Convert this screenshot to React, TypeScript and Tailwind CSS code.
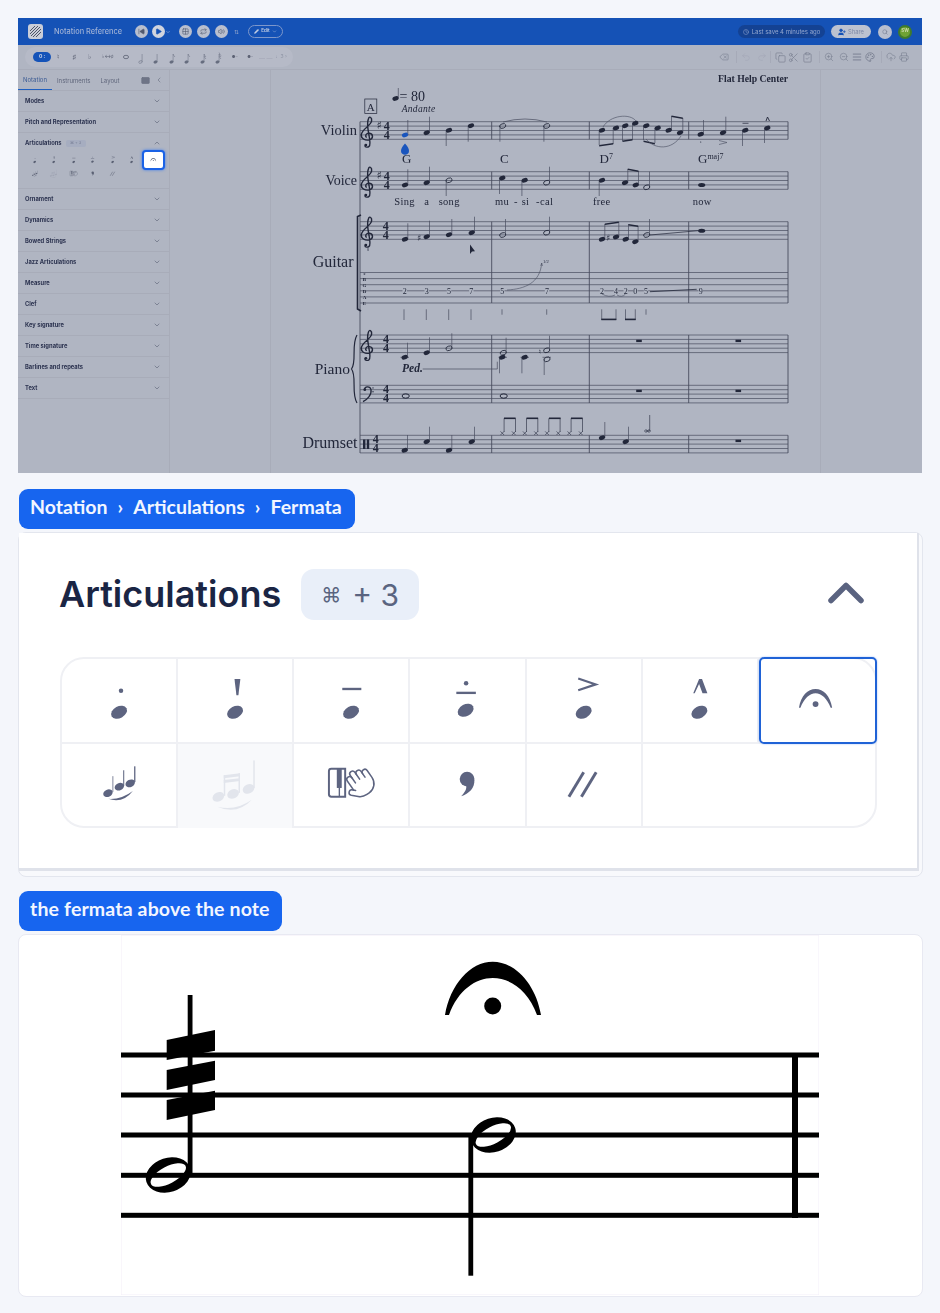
import type { ReactNode } from "react";
import {
  AlignJustify,
  ChevronDown,
  ChevronLeft,
  ChevronUp,
  ClipboardCheck,
  Clock,
  CloudUpload,
  Copy,
  Delete,
  Hand,
  Keyboard,
  Palette,
  Pencil,
  Play,
  Printer,
  Redo2,
  Repeat,
  Scissors,
  Search,
  SkipBack,
  Undo2,
  UserPlus,
  Volume2,
  ZoomIn,
  ZoomOut,
  Grid2x2,
} from "lucide-react";

const INK = "#22273a";
const LINE = "#474c5e";

function Head({ x, y }: { x: number; y: number }) {
  return <ellipse cx={x} cy={y} rx={8.6} ry={6} transform={`rotate(-28 ${x} ${y})`} />;
}

function ArtIcon({ kind }: { kind: string }) {
  return (
    <svg viewBox="0 1.5 116 85" className="block h-full w-full" fill="currentColor">
      {kind === "staccato" && (
        <>
          <circle cx={60} cy={34} r={2.3} />
          <Head x={58} y={56} />
        </>
      )}
      {kind === "wedge" && (
        <>
          <polygon points="57.4,22 63.4,22 61.4,38.5 59.4,38.5" />
          <Head x={58} y={56} />
        </>
      )}
      {kind === "tenuto" && (
        <>
          <rect x={49} y={31} width={19.5} height={2.4} />
          <Head x={58} y={56} />
        </>
      )}
      {kind === "both" && (
        <>
          <circle cx={57} cy={26.3} r={2.3} />
          <rect x={47} y={35} width={20} height={2.4} />
          <Head x={56.5} y={54} />
        </>
      )}
      {kind === "accent" && (
        <>
          <polyline points="52,21.5 70,27.5 52,33.5" fill="none" stroke="currentColor" strokeWidth={2.2} />
          <Head x={57.6} y={56} />
        </>
      )}
      {kind === "marcato" && (
        <>
          <polygon points="57,22 60,22 65.5,36.5 60.5,36.5 57,27 52.5,36.5 51,36.5" />
          <Head x={57.3} y={56} />
        </>
      )}
      {kind === "fermata" && (
        <g transform="translate(-0.5 0)">
          <path d="M39 51.5C41 39 48 32.3 56 32.3C64 32.3 71 39 73 51.5L71.5 51.5C68 42 62 36.5 56 36.5C50 36.5 44 42 40.5 51.5Z" />
          <circle cx={56} cy={47.7} r={3} />
        </g>
      )}
      {kind === "slur" && (
        <>
          <ellipse cx={46.7} cy={51.3} rx={5} ry={3.7} transform="rotate(-25 46.7 51.3)" />
          <ellipse cx={58.3} cy={44.7} rx={5} ry={3.7} transform="rotate(-25 58.3 44.7)" />
          <ellipse cx={69.3} cy={41.3} rx={5} ry={3.7} transform="rotate(-25 69.3 41.3)" />
          <rect x={51} y={34} width={1.3} height={16} opacity={0.6} />
          <rect x={62} y={28} width={1.3} height={16} opacity={0.8} />
          <rect x={73.3} y={24} width={1.3} height={16} />
          <path d="M47 57Q60 58 72 49Q62 62 47 57Z" />
        </>
      )}
      {kind === "beamed" && (
        <>
          <ellipse cx={41} cy={55} rx={6.2} ry={4.6} transform="rotate(-25 41 55)" />
          <ellipse cx={56} cy={52} rx={6.2} ry={4.6} transform="rotate(-25 56 52)" />
          <ellipse cx={71.7} cy={47} rx={6.2} ry={4.6} transform="rotate(-25 71.7 47)" />
          <rect x={46.5} y={33} width={1.5} height={21} />
          <rect x={61.5} y={31} width={1.5} height={20} />
          <rect x={76.5} y={18} width={1.5} height={28} />
          <polygon points="46.5,33 63,31 63,34 46.5,36" />
          <polygon points="46.5,38 63,36 63,39 46.5,41" />
          <path d="M40 65Q58 70 75 58Q60 74 40 65Z" />
        </>
      )}
      {kind === "piano" && (
        <>
          <path d="M38 26.5H52V55H38Q35.5 55 35.5 52.5V29Q35.5 26.5 38 26.5Z" fill="none" stroke="currentColor" strokeWidth={2} />
          <rect x={43.5} y={26} width={5} height={20} />
          <rect x={45.4} y={46} width={1.4} height={9} />
          <g transform="translate(49 24) rotate(-35 17 17)">
            <Hand width={34} height={34} strokeWidth={1.1} />
          </g>
        </>
      )}
      {kind === "comma" && (
        <>
          <circle cx={58} cy={37} r={7.5} />
          <path d="M65.4 38C66 46 60 52 52 54.5C56 50 58 47 57 43Z" />
        </>
      )}
      {kind === "slashes" && (
        <g stroke="currentColor" strokeWidth={3}>
          <line x1={42.6} y1={55} x2={57.6} y2={30} />
          <line x1={55.3} y1={55} x2={70.3} y2={30} />
        </g>
      )}
    </svg>
  );
}

const topKinds = ["staccato", "wedge", "tenuto", "both", "accent", "marcato"];
const bottomKinds = ["slur", "beamed", "piano", "comma", "slashes"];

function NoteGlyph({ flags = 0, hollow = false }: { flags?: number; hollow?: boolean }) {
  return (
    <svg width="10" height="16" viewBox="0 0 10 16" className="text-[#666c7e]">
      <ellipse cx="3.5" cy="13" rx="1.8" ry="1.2" transform="rotate(-20 3.5 13)" fill={hollow ? "none" : "currentColor"} stroke="currentColor" strokeWidth="0.5" />
      <line x1="5.1" y1="13" x2="5.1" y2="5" stroke="currentColor" strokeWidth="0.5" />
      {flags > 0 && <path d="M5.1 5Q5.8 7 7 8" fill="none" stroke="currentColor" strokeWidth="0.5" />}
      {flags > 1 && <path d="M5.1 7Q5.8 9 7 10" fill="none" stroke="currentColor" strokeWidth="0.5" />}
      {flags > 2 && <path d="M5.1 3.5Q5.8 5.5 7 6.5" fill="none" stroke="currentColor" strokeWidth="0.5" />}
    </svg>
  );
}

function LeftToolbar() {
  const cell = "flex h-5 w-[15.5px] shrink-0 items-center justify-center text-[7px] text-[#5c6274]";
  const dotted = "flex h-5 w-[15.5px] shrink-0 items-center justify-center text-[4px] text-[#5c6274]";
  return (
    <div className="flex h-5 w-[268px] items-center rounded-full bg-[#b6bac7] pl-[8px]">
      <div className="flex h-[10px] w-[18px] items-center justify-center rounded-full bg-[#1553b8] text-[5px] font-bold text-[#cfd8ea]">0 :</div>
      <div className={cell}>♮</div>
      <div className={cell}>♯</div>
      <div className={cell}>♭</div>
      <div className="flex h-5 w-[21px] shrink-0 items-center justify-center text-[5px] text-[#5c6274]">♭↔♯</div>
      <div className={cell}>
        <svg width="8" height="6" viewBox="0 0 8 6"><ellipse cx="4" cy="3" rx="2.6" ry="1.7" fill="none" stroke="#5c6274" strokeWidth="0.8" /></svg>
      </div>
      <div className={cell}><NoteGlyph hollow /></div>
      <div className={cell}><NoteGlyph /></div>
      <div className={cell}><NoteGlyph flags={1} /></div>
      <div className={cell}><NoteGlyph flags={1} /></div>
      <div className={cell}><NoteGlyph flags={2} /></div>
      <div className={cell}><NoteGlyph flags={3} /></div>
      <div className={dotted}>●··</div>
      <div className={dotted}>●··</div>
      <div className="flex h-5 w-[15.5px] shrink-0 items-center justify-center text-[6px] text-[#a0a5b4]">— —</div>
      <div className="flex h-5 w-[15.5px] shrink-0 items-center justify-center text-[5px] text-[#9096a6]">♩3 ›</div>
    </div>
  );
}

function RightToolbar() {
  const icon = "text-[#777d8f]";
  return (
    <div className="flex items-center">
      <Delete size={10} strokeWidth={1.4} className={icon} />
      <div className="mr-[4px] ml-[7px] h-3 w-px bg-[#a6aab8]" />
      <Undo2 size={10} strokeWidth={1.2} className="text-[#a0a5b4]" />
      <Redo2 size={10} strokeWidth={1.2} className="ml-[6px] text-[#a0a5b4]" />
      <div className="mr-[4px] ml-[3px] h-3 w-px bg-[#a6aab8]" />
      <Copy size={11} strokeWidth={1.4} className={icon} />
      <Scissors size={11} strokeWidth={1.4} className={`ml-[2px] ${icon}`} />
      <ClipboardCheck size={11} strokeWidth={1.4} className={`ml-[3px] ${icon}`} />
      <div className="mr-[4px] ml-[6px] h-3 w-px bg-[#a6aab8]" />
      <ZoomIn size={10} strokeWidth={1.4} className={icon} />
      <ZoomOut size={10} strokeWidth={1.4} className={`ml-[5px] ${icon}`} />
      <AlignJustify size={10} strokeWidth={2.2} className={`ml-[3px] ${icon}`} />
      <Palette size={10} strokeWidth={2} className={`ml-[3px] ${icon}`} />
      <div className="mr-[4px] ml-[6px] h-3 w-px bg-[#a6aab8]" />
      <CloudUpload size={10} strokeWidth={1.4} className={icon} />
      <Printer size={10} strokeWidth={1.4} className={`ml-[3px] ${icon}`} />
    </div>
  );
}

function RoundBtn({ children, className = "" }: { children: ReactNode; className?: string }) {
  return <div className={`flex h-[13px] w-[13px] items-center justify-center rounded-full bg-[#b9bfce] text-[#51596e] ${className}`}>{children}</div>;
}

function Header() {
  return (
    <div className="flex h-[27px] items-center justify-between bg-[#1552b6] pl-[10px] pr-[10px]">
      <div className="flex items-center">
        <div className="flex h-[15px] w-[15px] items-center justify-center overflow-hidden rounded-[3px] bg-[#c9cdd8]">
          <svg width="11" height="11" viewBox="0 0 11 11" stroke="#4d5468" strokeWidth="1">
            <line x1="0" y1="5" x2="5" y2="0" />
            <line x1="0" y1="8" x2="8" y2="0" />
            <line x1="1" y1="10" x2="10" y2="1" />
            <line x1="3" y1="11" x2="11" y2="3" />
            <line x1="6" y1="11" x2="11" y2="6" />
          </svg>
        </div>
        <span className="ml-[11px] w-[80px] text-[7.4px] leading-none font-medium text-[#9fb1d6]">Notation Reference</span>
        <RoundBtn className="ml-[1px]"><SkipBack size={7} fill="currentColor" /></RoundBtn>
        <RoundBtn className="ml-[4px] bg-[#d0d4de]"><Play size={7} fill="#1552b6" className="text-[#1552b6]" /></RoundBtn>
        <ChevronDown size={6} className="text-[#a9b9da]" />
        <RoundBtn className="ml-[8px]"><Grid2x2 size={7} /></RoundBtn>
        <RoundBtn className="ml-[5px]"><Repeat size={7} /></RoundBtn>
        <RoundBtn className="ml-[5px]"><Volume2 size={7} /></RoundBtn>
        <span className="ml-[6px] text-[6px] leading-none text-[#8fa3cc]">⇅</span>
        <div className="ml-[9px] flex h-[13px] w-[35px] items-center justify-center gap-[2px] rounded-full border border-[#7d97cb] text-[#c4cfe4]">
          <Pencil size={5} fill="currentColor" />
          <span className="text-[4.6px] leading-none font-semibold">Edit</span>
          <ChevronDown size={5} />
        </div>
      </div>
      <div className="flex items-center">
        <div className="flex h-[13px] w-[87px] items-center justify-center gap-[3px] rounded-full bg-[#144293] text-[#93a7cf]">
          <Clock size={6} />
          <span className="text-[6px] leading-none">Last save 4 minutes ago</span>
        </div>
        <div className="ml-[6px] flex h-[13px] w-[40px] items-center justify-center gap-[2px] rounded-full bg-[#bcc2d0]">
          <UserPlus size={8} fill="#1552b6" className="text-[#1552b6]" />
          <span className="text-[5.8px] leading-none text-[#7d88a6]">Share</span>
        </div>
        <div className="ml-[7px] flex h-[14px] w-[14px] items-center justify-center rounded-full bg-[#b9bfce] text-[#6d7589]">
          <Search size={6} />
        </div>
        <div className="ml-[6px] flex h-[14px] w-[14px] items-center justify-center rounded-full border-2 border-[#3f7a2d] bg-[#6fa234] text-[4.5px] font-bold text-[#c9d8a8]">SW</div>
      </div>
    </div>
  );
}

const sections = [
  "Ornament",
  "Dynamics",
  "Bowed Strings",
  "Jazz Articulations",
  "Measure",
  "Clef",
  "Key signature",
  "Time signature",
  "Barlines and repeats",
  "Text",
];

function SideRow({ label }: { label: string }) {
  return (
    <div className="flex h-[21px] items-center justify-between border-b border-[#a8acb9] pl-[7px] pr-[8px]">
      <span className="text-[5.8px] leading-none font-bold text-[#2c3350]">{label}</span>
      <ChevronDown size={8} strokeWidth={1.6} className="text-[#4f566c]" />
    </div>
  );
}

function Sidebar() {
  return (
    <div className="w-[152px] shrink-0 border-r border-[#a8acb9]">
      <div className="flex h-[21px] items-center justify-between border-b border-[#a8acb9] pr-[6px] text-[6px] text-[#60677c]">
        <div className="flex h-full items-center">
          <span className="flex h-full w-[34px] items-center justify-center border-b border-[#1f5fbf] text-[#3d5c94]">Notation</span>
          <span className="ml-[5px]">Instruments</span>
          <span className="ml-[10px]">Layout</span>
        </div>
        <div className="flex items-center gap-[5px]">
          <Keyboard size={9} fill="#6e7486" className="text-[#6e7486]" />
          <ChevronLeft size={8} className="text-[#6e7486]" />
        </div>
      </div>
      <SideRow label="Modes" />
      <SideRow label="Pitch and Representation" />
      <div className="h-[56px] border-b border-[#a8acb9]">
        <div className="flex h-5 items-center justify-between pl-[7px] pr-[8px]">
          <div className="flex items-center">
            <span className="text-[5.8px] leading-none font-bold text-[#2c3350]">Articulations</span>
            <span className="ml-[4px] flex h-[7px] w-5 items-center justify-center rounded-[2px] bg-[#a6adc0] text-[4px] leading-none text-[#7a8198]">⌘ + 3</span>
          </div>
          <ChevronUp size={8} strokeWidth={1.6} className="text-[#4f566c]" />
        </div>
        <div className="ml-[7px] grid w-[136px] grid-cols-7 text-[#5a6073]">
          {topKinds.map((k) => (
            <div key={k} className="h-[14px]"><ArtIcon kind={k} /></div>
          ))}
          <div className="relative h-[14px]">
            <div className="absolute -top-[3px] -right-[4px] -bottom-[3px] left-0 rounded-[4px] border-2 border-[#1a62e6] bg-white text-[#5a6073] shadow-[0_0_3px_#3b7bf0]">
              <ArtIcon kind="fermata" />
            </div>
          </div>
          {bottomKinds.map((k) => (
            <div key={k} className={`h-[14px] ${k === "beamed" ? "text-[#a0a5b4]" : ""}`}><ArtIcon kind={k} /></div>
          ))}
        </div>
      </div>
      {sections.map((s) => (
        <SideRow key={s} label={s} />
      ))}
    </div>
  );
}

function Staff({ y, lines = 5, gap = 4.4 }: { y: number; lines?: number; gap?: number }) {
  return (
    <>
      {Array.from({ length: lines }, (_, i) => (
        <line key={i} x1={360} x2={788} y1={y + i * gap} y2={y + i * gap} stroke={LINE} strokeWidth={0.7} />
      ))}
    </>
  );
}

function Bars({ y1, y2 }: { y1: number; y2: number }) {
  return (
    <>
      {[491.7, 589.3, 688.7, 788].map((x) => (
        <line key={x} x1={x} x2={x} y1={y1} y2={y2} stroke={LINE} strokeWidth={0.9} />
      ))}
    </>
  );
}

function Note({ x, y, to, hollow = false, color = INK }: { x: number; y: number; to?: number; hollow?: boolean; color?: string }) {
  const sx = to === undefined ? x : to < y ? x + 2.8 : x - 2.8;
  return (
    <>
      {to !== undefined && <line x1={sx} x2={sx} y1={y} y2={to} stroke={LINE} strokeWidth={0.7} />}
      <ellipse
        cx={x}
        cy={y}
        rx={3.2}
        ry={2.2}
        transform={`rotate(-20 ${x} ${y})`}
        fill={hollow ? "none" : color}
        stroke={hollow ? INK : "none"}
        strokeWidth={0.8}
      />
    </>
  );
}

function Beam({ x1, x2, y1, y2 }: { x1: number; x2: number; y1: number; y2: number }) {
  return <polygon points={`${x1},${y1} ${x2},${y2} ${x2},${y2 + 1.6} ${x1},${y1 + 1.6}`} fill={INK} />;
}

function TrebleClef({ x, y }: { x: number; y: number }) {
  return (
    <g transform={`translate(${x} ${y}) scale(1.2 1)`}>
      <path
        d="M-2 10C-3.5 12 -0.5 12.8 0.8 11.5C2.4 10 1.6 5 0.8 0C0 -6 -1.2 -11 0.3 -16C1.2 -19.5 3.4 -17.5 3 -14C2.5 -9.5 -5 -6 -5.6 -0.5C-6 3.5 -2.5 5.8 1 5C4.6 4 4.6 -1 1.2 -1.8C-1.2 -2.2 -3 0.6 -1.2 2.6"
        fill="none"
        stroke={INK}
        strokeWidth={1.2}
      />
      <circle cx={-1.8} cy={10} r={1.2} fill={INK} />
    </g>
  );
}

function BassClef({ x, y }: { x: number; y: number }) {
  return (
    <g transform={`translate(${x} ${y})`} fill={INK}>
      <path d="M1.5 0C1.5 -3.5 7 -4 8 0C9 5 4 10 0 12" fill="none" stroke={INK} strokeWidth={1.3} />
      <circle cx={1.8} cy={0} r={1.4} />
      <circle cx={10} cy={-1.8} r={0.7} />
      <circle cx={10} cy={2} r={0.7} />
    </g>
  );
}

function Meter({ x, y }: { x: number; y: number }) {
  return (
    <g fontSize={12} fontWeight={700} textAnchor="middle" fill={INK}>
      <text x={x} y={y + 8}>4</text>
      <text x={x} y={y + 16.8}>4</text>
    </g>
  );
}

function Rest({ x, y }: { x: number; y: number }) {
  return <rect x={x - 2.8} y={y - 1} width={5.6} height={2.4} fill={INK} />;
}

function DrumX({ x }: { x: number }) {
  return (
    <g stroke={INK} strokeWidth={0.6}>
      <line x1={x - 1.8} x2={x + 1.8} y1={431.4} y2={435} />
      <line x1={x + 1.8} x2={x - 1.8} y1={431.4} y2={435} />
      <line x1={x + 1.8} x2={x + 1.8} y1={418.3} y2={432} />
    </g>
  );
}

function Sharp({ x, y, size = 11 }: { x: number; y: number; size?: number }) {
  return <text x={x} y={y} fontSize={size} fill={INK} fontFamily="DejaVu Sans">♯</text>;
}

function Score() {
  return (
    <svg viewBox="271 70 549 403" className="block h-[403px] w-[549px] font-['Liberation_Serif',serif]">
      <text x={788} y={82} fontSize={9.7} fontWeight={700} textAnchor="end" fill={INK}>Flat Help Center</text>

      <rect x={364.8} y={99} width={12} height={14.4} fill="none" stroke={INK} strokeWidth={0.7} />
      <text x={370.8} y={110.5} fontSize={11} textAnchor="middle" fill={INK}>A</text>
      <Note x={395.5} y={98.5} to={88} />
      <text x={399.5} y={100.8} fontSize={14} fill={INK}>= 80</text>
      <text x={401.7} y={112} fontSize={9.5} fontStyle="italic" fill={INK} letterSpacing={0.3}>Andante</text>

      {/* staff labels */}
      <g textAnchor="end" fill={INK}>
        <text x={357} y={135} fontSize={14.5}>Violin</text>
        <text x={357} y={185} fontSize={14}>Voice</text>
        <text x={353.5} y={266.7} fontSize={16}>Guitar</text>
        <text x={350} y={373.5} fontSize={15.5}>Piano</text>
        <text x={357.5} y={448.3} fontSize={16}>Drumset</text>
      </g>

      <line x1={360} x2={360} y1={121.7} y2={453} stroke={LINE} strokeWidth={0.9} />

      {/* violin */}
      <Staff y={121.7} />
      <Bars y1={121.7} y2={139.3} />
      <TrebleClef x={368} y={135} />
      <Sharp x={376.5} y={129} />
      <Meter x={386.7} y={121.7} />
      <Note x={405} y={135} to={120} color="#1a55bd" />
      <path d="M405 143.5C402 147 401 149 401 151C401 156 409 156 409 151C409 149 408 147 405 143.5Z" fill="#1a55bd" />
      <Note x={426.7} y={132.7} to={116.7} />
      <Note x={449} y={130.3} to={146} />
      <Note x={471} y={125.7} to={141.7} />
      <Note x={502.7} y={126} to={141.7} hollow />
      <Note x={546.7} y={126} to={141.7} hollow />
      <path d="M503 122Q525 116 547 122" fill="none" stroke={LINE} strokeWidth={0.7} />
      <Note x={602} y={130.3} to={145} />
      <Note x={616} y={128} to={144} />
      <Beam x1={599.2} x2={613.2} y1={145} y2={143} />
      <Note x={625.3} y={125.7} to={141} />
      <Note x={635.3} y={123.3} to={139.5} />
      <Beam x1={622.5} x2={632.5} y1={140.5} y2={139} />
      <Note x={646.3} y={125.7} to={140} />
      <Note x={657.7} y={128} to={143} />
      <Beam x1={643.5} x2={654.9} y1={140.5} y2={143} />
      <Note x={668.7} y={130.3} to={116} />
      <Note x={680} y={132.7} to={118} />
      <Beam x1={671.5} x2={682.8} y1={115.5} y2={117.5} />
      <path d="M603 127C610 115 630 113 636 121" fill="none" stroke={LINE} strokeWidth={0.6} />
      <path d="M646 139C655 150 672 150 681 136" fill="none" stroke={LINE} strokeWidth={0.6} />
      <Note x={700.7} y={134.3} to={120} />
      <circle cx={700.7} cy={142} r={0.6} fill={INK} />
      <Note x={723} y={132.7} to={116.7} />
      <polyline points="719,140.5 727,142.5 719,144.5" fill="none" stroke={LINE} strokeWidth={0.6} />
      <Note x={745.3} y={130.3} to={146} />
      <line x1={742.5} x2={748.5} y1={123.3} y2={123.3} stroke={INK} strokeWidth={0.7} />
      <Note x={767.3} y={128} to={143} />
      <path d="M766 121L767.5 117L769.5 121" fill="none" stroke={INK} strokeWidth={0.9} />

      {/* chords */}
      <g fontSize={13} fill={INK}>
        <text x={402} y={163}>G</text>
        <text x={500} y={163}>C</text>
        <text x={599.5} y={163}>D<tspan fontSize={8} dy={-4}>7</tspan></text>
        <text x={698} y={163}>G<tspan fontSize={8} dy={-4}>maj7</tspan></text>
      </g>

      {/* voice */}
      <Staff y={171.7} />
      <Bars y1={171.7} y2={189.3} />
      <TrebleClef x={368} y={185} />
      <Sharp x={376.5} y={179} />
      <Meter x={386.7} y={171.7} />
      <Note x={405} y={185} to={169.3} />
      <Note x={426.7} y={182.7} to={166.7} />
      <Note x={449} y={180.3} to={196} hollow />
      <Note x={502.3} y={178} to={194} />
      <Note x={524.7} y={180.3} to={196} />
      <Note x={546.7} y={182.7} to={166.7} hollow />
      <Note x={602} y={180.3} to={196} />
      <Note x={625} y={182.7} to={169} />
      <Note x={635.7} y={185} to={171} />
      <Beam x1={627.8} x2={638.5} y1={168.5} y2={170.5} />
      <Note x={646.7} y={187.3} to={171.7} hollow />
      <ellipse cx={701.7} cy={185} rx={3.6} ry={2} fill={INK} />
      <g fontSize={10.5} fill={INK} letterSpacing={0.3}>
        <text x={394.3} y={205}>Sing</text>
        <text x={424.3} y={205}>a</text>
        <text x={438.7} y={205}>song</text>
        <text x={495} y={205}>mu</text>
        <text x={514} y={205}>-</text>
        <text x={521.7} y={205}>si</text>
        <text x={536} y={205}>-</text>
        <text x={540} y={205}>cal</text>
        <text x={593} y={205}>free</text>
        <text x={692.7} y={205}>now</text>
      </g>

      {/* guitar */}
      <path d="M361 215L357.5 216.5V309L361 311" fill="none" stroke={INK} strokeWidth={1.6} />
      <Staff y={221.7} />
      <Staff y={272.5} lines={6} gap={6.1} />
      <Bars y1={221.7} y2={303} />
      <TrebleClef x={368} y={235} />
      <text x={368} y={251} fontSize={4} textAnchor="middle" fill={INK}>8</text>
      <Meter x={385.7} y={221.7} />
      <Note x={405} y={239.3} to={223.3} />
      <Sharp x={417} y={241} size={9} />
      <Note x={426.7} y={236.7} to={220.7} />
      <Note x={449} y={234.7} to={219} />
      <Note x={471.7} y={232.7} to={216.7} />
      <Note x={502.7} y={235} to={219} hollow />
      <Note x={546.7} y={232.7} to={216.7} hollow />
      <Note x={602} y={239.3} to={224} />
      <Sharp x={606} y={241} size={9} />
      <Note x={616} y={237} to={222} />
      <Beam x1={604.8} x2={618.8} y1={223.5} y2={221.5} />
      <Note x={625.7} y={239.3} to={224} />
      <Note x={635.3} y={241.7} to={226} />
      <Beam x1={628.5} x2={638.1} y1={224} y2={225.5} />
      <Note x={646.7} y={235} to={219} hollow />
      <ellipse cx={701.7} cy={230.7} rx={3.6} ry={2} fill={INK} />
      <line x1={650} x2={698} y1={235} y2={230.7} stroke={INK} strokeWidth={0.7} />
      <path d="M470 244.5L470 254L472 251.6L475 251.2Z" fill={INK} />

      <g fontSize={5} fontWeight={700} textAnchor="middle" fill={INK}>
        <text x={364.5} y={274.5}>e</text>
        <text x={364.5} y={280.5}>B</text>
        <text x={364.5} y={286.5}>G</text>
        <text x={364.5} y={292.5}>D</text>
        <text x={364.5} y={298.5}>A</text>
        <text x={364.5} y={304.5}>E</text>
      </g>
      <g fontSize={8} textAnchor="middle" fill={INK}>
        {[
          [404.7, "2"],
          [426.7, "3"],
          [449, "5"],
          [471.3, "7"],
          [502.3, "5"],
          [547, "7"],
          [602, "2"],
          [616, "4"],
          [625.7, "2"],
          [635.3, "0"],
          [646, "5"],
          [700.7, "9"],
        ].map(([x, n]) => (
          <g key={`${x}`}>
            <rect x={(x as number) - 2.2} y={287.5} width={4.4} height={6.4} fill="#b0b5c2" />
            <text x={x} y={293.5}>{n}</text>
          </g>
        ))}
      </g>
      <path d="M507 290C525 289 540 283 541.7 263" fill="none" stroke={LINE} strokeWidth={0.6} />
      <path d="M541.7 263L540.7 266M541.7 263L542.7 266" fill="none" stroke={LINE} strokeWidth={0.5} />
      <text x={543} y={263} fontSize={4.5} fill={INK}>1/2</text>
      <path d="M602 294Q609 298 615 295M617 295Q622 298 625.5 294" fill="none" stroke={LINE} strokeWidth={0.6} />
      <line x1={650} x2={696.7} y1={291.7} y2={289.3} stroke={INK} strokeWidth={0.8} />

      {/* rhythm stems */}
      <g stroke={LINE} strokeWidth={0.7}>
        {[404, 426.3, 448.7, 471].map((x) => (
          <line key={x} x1={x} x2={x} y1={309.3} y2={320} />
        ))}
        {[502, 546.7, 646].map((x) => (
          <line key={x} x1={x} x2={x} y1={309.3} y2={314.7} />
        ))}
        {[601.7, 616, 625.5, 635.3].map((x) => (
          <line key={x} x1={x} x2={x} y1={309.3} y2={320} />
        ))}
      </g>
      <rect x={601.3} y={318.6} width={15} height={1.6} fill={INK} />
      <rect x={625} y={318.6} width={10.7} height={1.6} fill={INK} />

      {/* piano */}
      <path d="M357 335C351 345 357 362 351.5 369C357 376 351 393 357 403" fill="none" stroke={INK} strokeWidth={1.2} />
      <Staff y={335} />
      <Staff y={385.3} />
      <Bars y1={335} y2={403} />
      <TrebleClef x={368} y={348.3} />
      <BassClef x={363} y={389.7} />
      <Meter x={386} y={335} />
      <Meter x={386} y={385.3} />
      <line x1={400.5} x2={409} y1={357.3} y2={357.3} stroke={LINE} strokeWidth={0.7} />
      <Note x={404.7} y={357.3} to={342.7} />
      <Note x={426.7} y={352.7} to={337.3} />
      <Note x={449} y={348.3} to={333.3} hollow />
      <line x1={498.5} x2={507} y1={357.3} y2={357.3} stroke={LINE} strokeWidth={0.7} />
      <Note x={503.3} y={352.7} to={337.7} hollow />
      <Note x={502.3} y={357.3} to={373.3} />
      <line x1={520.5} x2={529} y1={357.3} y2={357.3} stroke={LINE} strokeWidth={0.7} />
      <Note x={524.7} y={357.3} to={373.3} />
      <line x1={542.5} x2={551} y1={357.3} y2={357.3} stroke={LINE} strokeWidth={0.7} />
      <text x={538.5} y={354} fontSize={7} fill={INK} fontFamily="DejaVu Sans">♮</text>
      <Note x={546.7} y={350.3} to={335.7} hollow />
      <Note x={547} y={359.3} to={375} hollow />
      <text x={402} y={371.7} fontSize={11.5} fontStyle="italic" fontWeight={700} fill={INK}>Ped.</text>
      <path d="M422.7 369H497.3V361.7" fill="none" stroke={LINE} strokeWidth={0.7} />
      <ellipse cx={405.7} cy={396} rx={3.6} ry={2.2} fill="none" stroke={INK} strokeWidth={1} />
      <ellipse cx={503.7} cy={396} rx={3.6} ry={2.2} fill="none" stroke={INK} strokeWidth={1} />
      <Rest x={639} y={340.7} />
      <Rest x={738.3} y={340.7} />
      <Rest x={639} y={390.7} />
      <Rest x={738.3} y={390.7} />

      {/* drumset */}
      <Staff y={435.3} />
      <Bars y1={435.3} y2={453} />
      <rect x={363} y={439.5} width={2.4} height={9.5} fill={INK} />
      <rect x={366.8} y={439.5} width={2.4} height={9.5} fill={INK} />
      <Meter x={375.7} y={435.3} />
      <Note x={404.7} y={450.3} to={435} />
      <Note x={426.7} y={441.7} to={426.7} />
      <Note x={449} y={450.3} to={435} />
      <Note x={471.7} y={441.7} to={426.7} />
      {[502.3, 513.7, 524.7, 536, 547, 558.3, 569.3, 580.7].map((x) => (
        <DrumX key={x} x={x} />
      ))}
      {[504, 526.5, 549, 571].map((x) => (
        <rect key={x} x={x} y={417.5} width={11.6} height={1.6} fill={INK} />
      ))}
      <Note x={602} y={437.7} to={422} />
      <Note x={625.7} y={441.7} to={426.7} />
      <line x1={644} x2={651} y1={431} y2={431} stroke={INK} strokeWidth={0.7} />
      <g stroke={INK} strokeWidth={0.6}>
        <line x1={645.5} x2={649.5} y1={429} y2={433} />
        <line x1={649.5} x2={645.5} y1={429} y2={433} />
        <line x1={649.7} x2={649.7} y1={431} y2={415} />
      </g>
      <Rest x={738.3} y={440.7} />
    </svg>
  );
}

function EditorPanel() {
  return (
    <div className="h-[455px] w-[904px] overflow-hidden font-['Inter',sans-serif]">
      <div className="h-full w-full bg-[#b0b5c2] blur-[0.35px]">
        <Header />
        <div className="flex h-[25px] items-center justify-between border-b border-[#a8acb9] pl-[7px] pr-[13px]">
          <LeftToolbar />
          <RightToolbar />
        </div>
        <div className="flex h-[403px]">
          <Sidebar />
          <div className="w-[101px] shrink-0 border-r border-[#a8acb9]" />
          <div className="shrink-0 border-r border-[#a8acb9]">
            <Score />
          </div>
        </div>
      </div>
    </div>
  );
}

function Tag({ children, className = "" }: { children: ReactNode; className?: string }) {
  return (
    <div className={`ml-px flex h-10 items-center rounded-[9px] bg-[#1765ef] pb-[4px] pl-[11px] font-['Lato',sans-serif] text-[19.5px] font-bold text-[#f2f6ff] ${className}`}>
      {children}
    </div>
  );
}

function ArticulationsCard() {
  const cell = "h-[85px] border-r-2 border-b-2 border-[#eff0f4] text-[#5d6480]";
  return (
    <div className="mt-[3px] h-[345px] w-[905px] rounded-[8px] border border-[#e3e6ee] bg-[#f8f9fc] font-['Inter',sans-serif]">
      <div className="h-[338px] w-[900px] border-r-[2px] border-b-[3px] border-[#dfe2ea] bg-white pt-[36px] pl-[41px]">
        <div className="-ml-px flex h-[51px] w-[805px] items-center justify-between">
          <div className="flex items-center">
            <h2 className="mb-[2px] text-[36px] leading-none font-semibold text-[#1a2544]">Articulations</h2>
            <div className="ml-[20px] flex h-[51px] w-[118px] items-center justify-center rounded-[13px] bg-[#e9eff9] text-[#5a6480]">
              <span className="text-[20px] leading-none">⌘</span>
              <span className="ml-[11px] text-[30px] leading-none">+ 3</span>
            </div>
          </div>
          <svg width="36" height="22" viewBox="0 0 36 22" fill="none" stroke="#5a6380" strokeWidth="5.5" strokeLinecap="round" strokeLinejoin="round" className="mb-[4px]">
            <polyline points="3,18.5 18,3.5 33,18.5" />
          </svg>
        </div>
        <div className="relative mt-[37px] grid h-[171px] w-[817px] grid-cols-7 rounded-[24px] border-2 border-[#eff0f4]">
          {topKinds.map((k, i) => (
            <div key={k} className={`${cell} ${i === 0 ? "rounded-tl-[22px]" : ""}`}>
              <ArtIcon kind={k} />
            </div>
          ))}
          <div className="relative h-[85px] border-b-2 border-[#eff0f4]">
            <div className="absolute -top-[2px] left-0 h-[87px] w-[118px] rounded-[5px] border-2 border-[#1f62d6] text-[#5d6480] shadow-[0_0_2px_#9dbcf5]">
              <ArtIcon kind="fermata" />
            </div>
          </div>
          <div className="h-[84px] rounded-bl-[22px] border-r-2 border-[#eff0f4] text-[#5d6480]">
            <ArtIcon kind="slur" />
          </div>
          <div className="h-[84px] border-r-2 border-[#eff0f4] bg-[#f8f9fb] text-[#e2e5ec]">
            <ArtIcon kind="beamed" />
          </div>
          <div className="h-[84px] border-r-2 border-[#eff0f4] text-[#5d6480]">
            <ArtIcon kind="piano" />
          </div>
          <div className="h-[84px] border-r-2 border-[#eff0f4] text-[#5d6480]">
            <ArtIcon kind="comma" />
          </div>
          <div className="h-[84px] border-r-2 border-[#eff0f4] text-[#5d6480]">
            <ArtIcon kind="slashes" />
          </div>
        </div>
      </div>
    </div>
  );
}

function FermataExample() {
  return (
    <div className="mt-[3px] h-[363px] w-[905px] rounded-[8px] border border-[#e8e9f2] bg-white pl-[102px]">
      <svg viewBox="121 935 698 360" className="block h-[360px] w-[698px]">
        <rect x={121} y={935} width={698} height={360} fill="#fff" stroke="#f3eef8" />
        <ellipse cx={168.3} cy={1175} rx={23} ry={17} transform="rotate(-18 168.3 1175)" fill="#000" />
        <ellipse cx={168.3} cy={1175} rx={19.5} ry={8.5} transform="rotate(-28 168.3 1175)" fill="#fff" />
        <ellipse cx={493.3} cy={1135} rx={23} ry={17} transform="rotate(-18 493.3 1135)" fill="#000" />
        <ellipse cx={493.3} cy={1135} rx={19.5} ry={8.5} transform="rotate(-28 493.3 1135)" fill="#fff" />
        {[1055, 1095, 1135, 1175.3, 1215.3].map((y) => (
          <rect key={y} x={121} y={y - 2.5} width={698} height={5} fill="#000" />
        ))}
        <rect x={187.7} y={995} width={4.8} height={178} fill="#000" />
        <polygon points="166.7,1040 215,1030 215,1050.7 166.7,1060" fill="#000" />
        <polygon points="166.7,1070 215,1060.7 215,1080 166.7,1090" fill="#000" />
        <polygon points="166.7,1100 215,1090.7 215,1110 166.7,1120" fill="#000" />
        <rect x={468.4} y={1136} width={4.8} height={139.7} fill="#000" />
        <rect x={792} y={1053} width={6} height={165} fill="#000" />
        <path d="M445 1015C450 985 470 961.7 492.7 961.7C516 961.7 536 985 541 1015L537 1015C528 990 510 978 492.7 978C476 978 458 990 449 1015Z" fill="#000" />
        <circle cx={492.7} cy={1006} r={8.5} fill="#000" />
      </svg>
    </div>
  );
}

export default function App() {
  return (
    <div className="h-[1313px] w-[940px] overflow-hidden bg-[#f4f6fb] pt-[18px] pl-[18px]">
      <EditorPanel />
      <Tag className="mt-[16px] w-[336px]">
        Notation<span className="mx-[10px]">›</span>Articulations<span className="mx-[10px]">›</span>Fermata
      </Tag>
      <ArticulationsCard />
      <Tag className="mt-[14px] w-[263px] tracking-[0.15px]">the fermata above the note</Tag>
      <FermataExample />
    </div>
  );
}
